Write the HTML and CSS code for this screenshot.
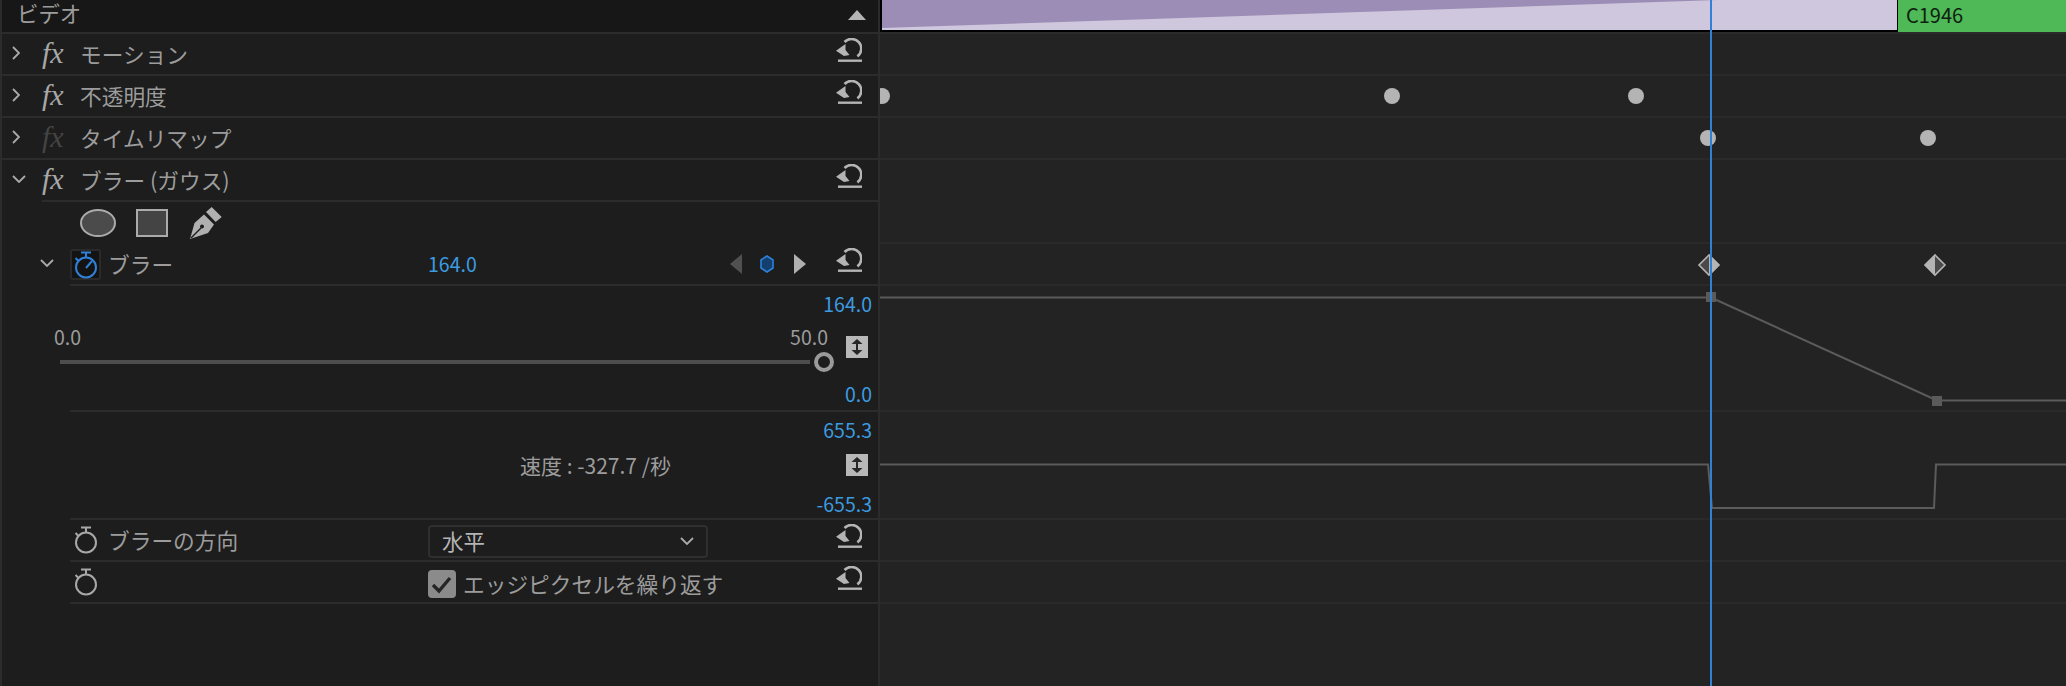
FILE: index.html
```
<!DOCTYPE html>
<html lang="ja">
<head>
<meta charset="utf-8">
<title>エフェクトコントロール</title>
<link rel="stylesheet" href="styles.css">
</head>
<body>
<svg class="defs" aria-hidden="true">
  <symbol id="reset" viewBox="0 0 26 26">
    <path d="M8.500 4A9.700 9.700 0 1 1 21.400 18.400" fill="none" stroke="currentColor" stroke-width="2.600"/>
    <polygon points="0,12.700 9.500,6 9.500,12 13.500,17 8,18"  fill="currentColor"/>
    <rect x="2" y="21.500" width="24" height="2.400" fill="currentColor"/>
  </symbol>
  <symbol id="right" viewBox="0 0 8 14"><polyline points="1,1 7,7 1,13" fill="none" stroke="currentColor" stroke-width="1.8"/></symbol>
  <symbol id="down" viewBox="0 0 14 8"><polyline points="1,1 7,7 13,1" fill="none" stroke="currentColor" stroke-width="1.8"/></symbol>
  <symbol id="watch" viewBox="0 0 24 28">
    <circle cx="12" cy="16.5" r="10" fill="none" stroke="currentColor" stroke-width="2"/>
    <path d="M7 1.500H17M12 1.500V6.500M1.500 7L5 10.500" fill="none" stroke="currentColor" stroke-width="2"/>
  </symbol>
  <symbol id="updown" viewBox="0 0 22 22">
    <polygon points="5.500,8 11,3 16.500,8" fill="#262626"/>
    <polygon points="5.500,14 11,19 16.500,14" fill="#262626"/>
    <rect x="10" y="6" width="2" height="10" fill="#262626"/>
  </symbol>
</svg>

<div class="app">
  <section class="panel">
    <div class="row head line">
      <span class="head-title">ビデオ</span>
      <svg class="collapse" viewBox="0 0 18 10"><polygon points="0,10 9,0 18,10"/></svg>
    </div>

    <div class="row line">
      <div class="gutter"><svg class="chev-r"><use href="#right"/></svg></div>
      <span class="fx">fx</span><span class="label">モーション</span>
      <svg class="reset"><use href="#reset"/></svg>
    </div>
    <div class="row line">
      <div class="gutter"><svg class="chev-r"><use href="#right"/></svg></div>
      <span class="fx">fx</span><span class="label">不透明度</span>
      <svg class="reset"><use href="#reset"/></svg>
    </div>
    <div class="row line">
      <div class="gutter"><svg class="chev-r"><use href="#right"/></svg></div>
      <span class="fx fx-off">fx</span><span class="label">タイムリマップ</span>
    </div>
    <div class="row">
      <div class="gutter"><svg class="chev-d"><use href="#down"/></svg></div>
      <div class="body">
        <span class="fx">fx</span><span class="label">ブラー (ガウス)</span>
        <svg class="reset"><use href="#reset"/></svg>
      </div>
    </div>

    <div class="row">
      <div class="gutter"></div>
      <div class="shapes">
        <svg class="shape-ellipse" viewBox="0 0 36 28"><ellipse cx="18" cy="14" rx="17" ry="13"/></svg>
        <svg class="shape-rect" viewBox="0 0 32 28"><rect x="1" y="1" width="30" height="26"/></svg>
        <svg class="shape-pen" viewBox="0 0 32 32">
          <polygon class="pen-fill" points="21.700,0 31.700,10 25.700,15 16,5"/>
          <polygon class="pen-fill" points="14,7.500 24,17.500 18,26 0,32 4.500,16"/>
          <path class="pen-slit" d="M1 31L11 21"/>
          <circle class="pen-hole" cx="12" cy="19.500" r="2"/>
        </svg>
      </div>
    </div>

    <div class="row">
      <div class="gutter gutter-prop"><svg class="chev-d"><use href="#down"/></svg></div>
      <div class="body">
        <div class="prop-name">
          <span class="watch-box watch-on"><svg class="watch"><use href="#watch"/></svg><svg class="watch-hand" viewBox="0 0 24 28"><path d="M12 17L18 10"/></svg></span>
          <span class="label">ブラー</span>
        </div>
        <span class="value blue">164.0</span>
        <div class="keynav">
          <svg class="tri" viewBox="0 0 12 20"><polygon class="tri-off" points="12,0 0,10 12,20"/></svg>
          <svg class="hex" viewBox="0 0 14 18"><polygon points="7,1 13,5 13,13 7,17 1,13 1,5"/></svg>
          <svg class="tri" viewBox="0 0 12 20"><polygon class="tri-on" points="0,0 12,10 0,20"/></svg>
        </div>
        <svg class="reset"><use href="#reset"/></svg>
      </div>
    </div>

    <div class="row row-graph">
      <div class="gutter gutter-prop"></div>
      <div class="body body-stack">
        <div class="slider">
          <div class="slider-labels"><span>0.0</span><span>50.0</span></div>
          <div class="slider-track"><div class="track"></div><div class="thumb"></div></div>
        </div>
        <div class="scale scale-value">
          <span class="blue">164.0</span>
          <svg class="updown"><use href="#updown"/></svg>
          <span class="blue">0.0</span>
        </div>
      </div>
    </div>

    <div class="row row-speed">
      <div class="gutter gutter-prop"></div>
      <div class="body body-stack">
        <div class="speed">速度 : -327.7 /秒</div>
        <div class="scale scale-speed">
          <span class="blue">655.3</span>
          <svg class="updown"><use href="#updown"/></svg>
          <span class="blue">-655.3</span>
        </div>
      </div>
    </div>

    <div class="row">
      <div class="gutter gutter-prop"></div>
      <div class="body">
        <div class="prop-name">
          <span class="watch-box"><svg class="watch"><use href="#watch"/></svg></span>
          <span class="label">ブラーの方向</span>
        </div>
        <div class="select"><span>水平</span><svg class="chev-select"><use href="#down"/></svg></div>
        <svg class="reset"><use href="#reset"/></svg>
      </div>
    </div>
    <div class="row">
      <div class="gutter gutter-prop"></div>
      <div class="body">
        <div class="prop-name">
          <span class="watch-box"><svg class="watch"><use href="#watch"/></svg></span>
        </div>
        <div class="check-wrap">
          <svg class="check" viewBox="0 0 28 28"><rect width="28" height="28" rx="4"/><path d="M5 15L11 21L22 8"/></svg>
          <span class="label">エッジピクセルを繰り返す</span>
        </div>
        <svg class="reset"><use href="#reset"/></svg>
      </div>
    </div>
  </section>

  <section class="timeline">
    <div class="clip-row">
      <div class="clip">
        <svg class="clip-art" viewBox="0 0 1015 30" preserveAspectRatio="none"><polygon points="0,0 835,0 0,28"/></svg>
      </div>
      <div class="clip-next">C1946</div>
    </div>
    <div class="track-row h42"></div>
    <div class="track-row h42"></div>
    <div class="track-row h42"></div>
    <div class="track-row h84"></div>
    <div class="track-row h42"></div>
    <div class="track-row h126"></div>
    <div class="track-row h108"></div>
    <div class="track-row h42"></div>
    <div class="track-row h42"></div>

    <svg class="overlay" viewBox="880 0 1186 686">
      <path class="curve" d="M880 297.500H1711L1937 400.500H2066"/>
      <path class="curve" d="M880 464.500H1708L1712 508H1934L1936 464.500H2066"/>
      <rect class="handle" x="1706" y="292" width="10" height="10"/>
      <rect class="handle" x="1932" y="396" width="10" height="10"/>

      <circle class="key" cx="882" cy="96" r="8"/>
      <circle class="key" cx="1392" cy="96" r="8"/>
      <circle class="key" cx="1636" cy="96" r="8"/>
      <circle class="key" cx="1708" cy="138" r="8"/>
      <circle class="key" cx="1928" cy="138" r="8"/>

      <polygon class="dia-dark" points="1709,255 1698.500,265 1709,275.500"/>
      <polygon class="key" points="1709,254.500 1719.500,265 1709,275.500"/>
      <polygon class="dia-line" points="1709,255 1699,265 1709,275 1719,265"/>

      <polygon class="key" points="1935,254.500 1924.500,265 1935,275.500"/>
      <polygon class="dia-dark" points="1935,255 1945.500,265 1935,275.500"/>
      <polygon class="dia-line" points="1935,255 1925,265 1935,275 1945,265"/>

      <rect class="playhead" x="1710" y="0" width="2" height="686"/>
    </svg>
  </section>
</div>
</body>
</html>
```
FILE: styles.css
```
* { box-sizing: border-box; }

html, body {
  margin: 0;
  height: 100%;
  background: #1d1d1d;
  overflow: hidden;
}

body {
  font-family: "Noto Sans CJK JP", "Noto Sans", sans-serif;
  font-size: 21.7px;
  color: #9c9c9c;
}

.defs { display: none; }

.app {
  display: flex;
  height: 686px;
}

/* left panel */
.panel {
  width: 880px;
  flex: none;
  background: #1d1d1d;
  border-left: 2px solid #2c2c2c;
  border-right: 2px solid #2b2b2b;
}

.row {
  display: flex;
  align-items: center;
  height: 42px;
}

.line { border-bottom: 2px solid #2c2c2c; }

.head {
  height: 34px;
  background: #171717;
  justify-content: space-between;
  padding: 0 12px 6px 15px;
  font-size: 21.4px;
}

.head-title { line-height: 26px; }

.collapse {
  width: 18px;
  height: 10px;
  fill: #b4b4b4;
  margin-top: 4px;
}

.gutter {
  width: 40px;
  height: 100%;
  flex: none;
  display: flex;
  align-items: center;
  padding-left: 10px;
}

.gutter-prop {
  width: 68px;
  padding-left: 38px;
}

.chev-r {
  width: 8px;
  height: 14px;
  color: #aaa;
  margin-top: -2px;
}

.chev-d {
  width: 14px;
  height: 8px;
  color: #aaa;
  margin-top: -4px;
}

.body {
  flex: 1;
  min-width: 0;
  height: 100%;
  display: flex;
  align-items: center;
  border-bottom: 2px solid #2c2c2c;
}

.fx {
  width: 38px;
  flex: none;
  font-family: "Liberation Serif", serif;
  font-style: italic;
  font-size: 30px;
  line-height: 40px;
  color: #a8a8a8;
  margin-top: -2px;
}

.fx-off { color: #444; }

.label {
  line-height: 28px;
  white-space: nowrap;
}

.reset {
  width: 26px;
  height: 26px;
  flex: none;
  color: #b4b4b4;
  align-self: flex-start;
  margin: 4px 16px 0 auto;
}

/* mask shape tools */
.shapes {
  display: flex;
  align-items: center;
  margin-left: 38px;
}

.shape-ellipse {
  width: 36px;
  height: 28px;
  fill: #4b4b4b;
  stroke: #ababab;
  stroke-width: 2;
}

.shape-rect {
  width: 32px;
  height: 28px;
  margin-left: 20px;
  fill: #444;
  stroke: #ababab;
  stroke-width: 2;
}

.shape-pen {
  width: 32px;
  height: 32px;
  margin-left: 22px;
}

.pen-fill { fill: #b0b0b0; }
.pen-slit { stroke: #1d1d1d; stroke-width: 1.5; fill: none; }
.pen-hole { fill: #1d1d1d; }

/* property rows */
.prop-name {
  width: 358px;
  flex: none;
  display: flex;
  align-items: center;
}

.watch-box {
  width: 31px;
  height: 31px;
  flex: none;
  margin-right: 7px;
  display: grid;
  place-items: center;
  color: #a8a8a8;
  border-radius: 3px;
}

.watch-box > svg { grid-area: 1 / 1; }

.watch-on {
  color: #2f80d6;
  background: #131313;
  border: 2px solid #2a2a2a;
}

.watch {
  width: 24px;
  height: 28px;
}

.watch-hand {
  width: 24px;
  height: 28px;
  fill: none;
  stroke: #2f80d6;
  stroke-width: 2;
}

.value {
  font-size: 19.5px;
  line-height: 26px;
}

.blue { color: #3c9be0; }

.keynav {
  display: flex;
  align-items: center;
  margin-left: auto;
  margin-right: 30px;
}

.keynav + .reset { margin-left: 0; }

.tri {
  width: 12px;
  height: 20px;
}

.tri-off { fill: #505050; }
.tri-on { fill: #b0b0b0; }

.hex {
  width: 14px;
  height: 18px;
  margin: 0 20px 0 18px;
  fill: #123f6e;
  stroke: #2f80d6;
  stroke-width: 1.6;
}

/* value graph */
.row-graph { height: 126px; }
.row-speed { height: 108px; }

.row-graph .gutter,
.row-speed .gutter { height: auto; }

.body-stack {
  display: grid;
  align-items: stretch;
}

.body-stack > * { grid-area: 1 / 1; }

.slider {
  width: 780px;
  margin-left: -16px;
  padding-top: 38px;
  font-size: 19.5px;
  color: #9c9c9c;
}

.slider-labels {
  display: flex;
  justify-content: space-between;
  padding-right: 6px;
  line-height: 26px;
}

.slider-track {
  display: flex;
  align-items: center;
  gap: 4px;
  padding-left: 6px;
  margin-top: 2px;
}

.track {
  flex: 1;
  height: 4px;
  background: #4d4d4d;
}

.thumb {
  width: 20px;
  height: 20px;
  flex: none;
  border: 4px solid #9a9a9a;
  border-radius: 50%;
}

.scale {
  display: flex;
  flex-direction: column;
  align-items: flex-end;
  justify-content: space-between;
  padding-right: 6px;
  font-size: 19.5px;
  line-height: 26px;
}

.scale-value { padding-top: 5px; padding-bottom: 3px; }
.scale-speed { padding-top: 5px; padding-bottom: 1px; }

.updown {
  width: 22px;
  height: 22px;
  background: #b8b8b8;
  margin-right: 4px;
  margin-bottom: 4px;
}

.speed {
  align-self: center;
  margin-left: 450px;
  font-size: 21px;
  line-height: 28px;
  white-space: nowrap;
  color: #9c9c9c;
}

/* dropdown and checkbox */
.select {
  width: 280px;
  height: 33px;
  flex: none;
  display: flex;
  align-items: center;
  justify-content: space-between;
  padding: 0 12px;
  margin-top: 2px;
  border: 2px solid #2f2f2f;
  border-radius: 4px;
  color: #b4b4b4;
  line-height: 26px;
  font-size: 21.5px;
}

.chev-select {
  width: 14px;
  height: 8px;
  color: #aaa;
}

.check-wrap {
  display: flex;
  align-items: center;
  gap: 7px;
  margin-top: 3px;
}

.check {
  width: 28px;
  height: 28px;
  flex: none;
  fill: #8b8b8b;
}

.check path {
  fill: none;
  stroke: #262626;
  stroke-width: 3.4;
}

/* timeline */
.timeline {
  flex: 1;
  min-width: 0;
  position: relative;
  overflow: hidden;
  background: #232323;
}

.clip-row {
  display: flex;
  height: 34px;
  border-bottom: 2px solid #2a2a2a;
}

.clip {
  width: 1018px;
  flex: none;
  background: #cfc7dd;
  border-left: 2px solid #000;
  border-right: 1px solid #000;
  border-bottom: 2px solid #000;
}

.clip-art {
  display: block;
  width: 100%;
  height: 100%;
  fill: #9b8db5;
}

.clip-next {
  flex: 1;
  padding-left: 8px;
  background: #4fb857;
  color: #0d1f10;
  font-size: 20px;
  line-height: 30px;
}

.track-row { border-bottom: 2px solid #2a2a2a; }
.h42 { height: 42px; }
.h84 { height: 84px; }
.h108 { height: 108px; }
.h126 { height: 126px; }

.overlay {
  position: absolute;
  top: 0;
  left: 0;
  width: 1186px;
  height: 686px;
}

.curve {
  fill: none;
  stroke: #5b5b5b;
  stroke-width: 2;
}

.handle { fill: #5a5a5a; }
.key { fill: #b4b4b4; }
.dia-dark { fill: #4a4a4a; }
.dia-line {
  fill: none;
  stroke: #b4b4b4;
  stroke-width: 1.6;
}

.playhead { fill: #2f80d6; }
```
